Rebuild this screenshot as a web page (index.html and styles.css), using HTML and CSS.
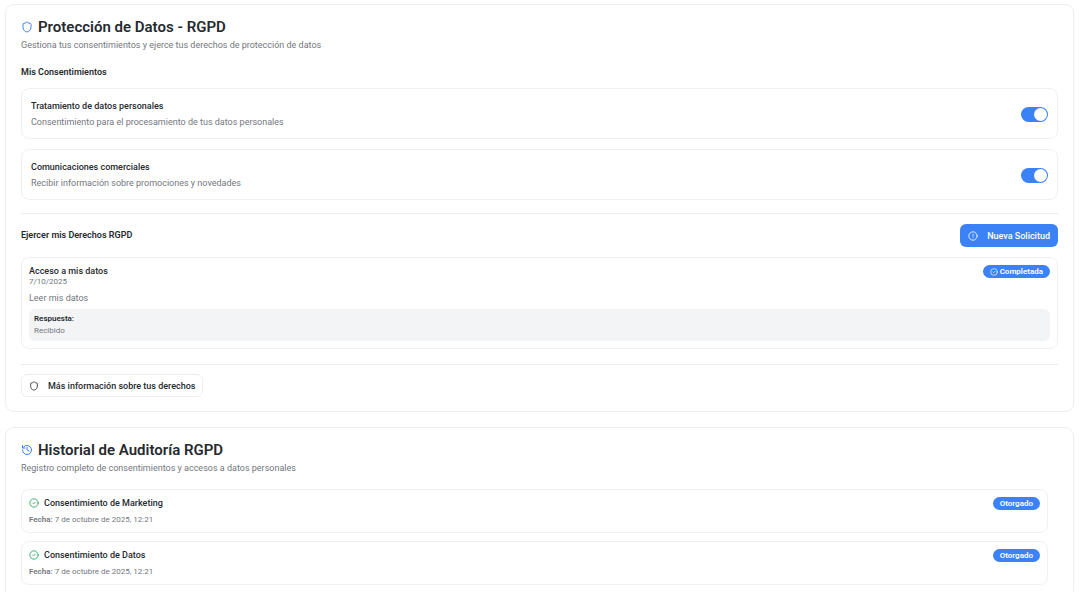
FILE: index.html
```html
<!DOCTYPE html>
<html lang="es">
<head>
<meta charset="utf-8">
<meta name="viewport" content="width=device-width, initial-scale=1">
<title>Protección de Datos - RGPD</title>
<link rel="stylesheet" href="styles.css">
</head>
<body>
<svg class="sprite" aria-hidden="true">
  <symbol id="shield" viewBox="0 0 24 24"><path d="M20 13c0 5-3.500 7.500-7.660 8.950a1 1 0 0 1-.67-.01C7.500 20.500 4 18 4 13V6a1 1 0 0 1 1-1c2 0 4.500-1.200 6.240-2.720a1.170 1.170 0 0 1 1.520 0C14.510 3.810 17 5 19 5a1 1 0 0 1 1 1z"/></symbol>
  <symbol id="history" viewBox="0 0 24 24"><path d="M3 12a9 9 0 1 0 9-9 9.750 9.750 0 0 0-6.740 2.740L3 8"/><path d="M3 3v5h5"/><path d="M12 7v5l4 2"/></symbol>
  <symbol id="alert" viewBox="0 0 24 24"><circle cx="12" cy="12" r="10"/><path d="M12 8v4M12 16h.01"/></symbol>
  <symbol id="check" viewBox="0 0 24 24"><circle cx="12" cy="12" r="10"/><path d="m9 12 2 2 4-4"/></symbol>
</svg>
<main class="page">
  <section class="card">
    <header class="card-header">
      <h1 class="card-title"><svg class="icon icon-title"><use href="#shield"/></svg>Protección de Datos - RGPD</h1>
      <p class="text">Gestiona tus consentimientos y ejerce tus derechos de protección de datos</p>
    </header>
    <h2 class="section-title">Mis Consentimientos</h2>
    <div class="consents">
      <div class="consent">
        <div class="consent-copy">
          <label class="label" for="personal">Tratamiento de datos personales</label>
          <p class="text">Consentimiento para el procesamiento de tus datos personales</p>
        </div>
        <input class="switch" type="checkbox" role="switch" id="personal" checked>
      </div>
      <div class="consent">
        <div class="consent-copy">
          <label class="label" for="commercial">Comunicaciones comerciales</label>
          <p class="text">Recibir información sobre promociones y novedades</p>
        </div>
        <input class="switch" type="checkbox" role="switch" id="commercial" checked>
      </div>
    </div>
    <div class="rights">
      <div class="row">
        <h2 class="section-title">Ejercer mis Derechos RGPD</h2>
        <button class="button button-primary" type="button"><svg class="icon icon-button"><use href="#alert"/></svg>Nueva Solicitud</button>
      </div>
      <article class="request">
        <div class="row row-top">
          <div>
            <h3 class="item-title">Acceso a mis datos</h3>
            <p class="date">7/10/2025</p>
          </div>
          <span class="badge"><svg class="icon icon-badge"><use href="#check"/></svg>Completada</span>
        </div>
        <p class="request-text">Leer mis datos</p>
        <div class="response">
          <p class="response-title">Respuesta:</p>
          <p>Recibido</p>
        </div>
      </article>
    </div>
    <footer class="card-footer">
      <button class="button button-outline" type="button"><svg class="icon icon-button"><use href="#shield"/></svg>Más información sobre tus derechos</button>
    </footer>
  </section>
  <section class="card">
    <header class="card-header">
      <h1 class="card-title"><svg class="icon icon-title"><use href="#history"/></svg>Historial de Auditoría RGPD</h1>
      <p class="text">Registro completo de consentimientos y accesos a datos personales</p>
    </header>
    <div class="history">
      <article class="entry">
        <div>
          <h3 class="item-title"><svg class="icon icon-entry"><use href="#check"/></svg>Consentimiento de Marketing</h3>
          <p class="entry-date"><strong>Fecha:</strong> 7 de octubre de 2025, 12:21</p>
        </div>
        <span class="badge">Otorgado</span>
      </article>
      <article class="entry">
        <div>
          <h3 class="item-title"><svg class="icon icon-entry"><use href="#check"/></svg>Consentimiento de Datos</h3>
          <p class="entry-date"><strong>Fecha:</strong> 7 de octubre de 2025, 12:21</p>
        </div>
        <span class="badge">Otorgado</span>
      </article>
    </div>
  </section>
</main>
</body>
</html>
```
FILE: styles.css
```css
* { box-sizing: border-box; }
html { height: 100vh; overflow: hidden; }
body {
  margin: 0;
  background: #fff;
  color: #262a2e;
  font-family: Roboto, "Liberation Sans", sans-serif;
  font-size: 9px;
  line-height: 14px;
}
h1, h2, h3, p { margin: 0; }
button { font: inherit; }
.sprite { position: absolute; width: 0; height: 0; }
.page { display: flex; flex-direction: column; gap: 15px; padding: 4px 6px 4px 5px; }
.card { padding: 14px 15px; border: 1px solid #ededef; border-radius: 9px; }
.card-header { display: grid; gap: 3px; margin-bottom: 14px; }
.card-title { display: flex; align-items: center; gap: 5px; font-size: 15px; line-height: 16px; font-weight: 600; }
.icon { flex: none; fill: none; stroke: currentColor; stroke-width: 2; stroke-linecap: round; stroke-linejoin: round; }
.icon-title { width: 12px; height: 12px; color: #3b82f6; }
.icon-button { width: 10px; height: 10px; }
.icon-badge { width: 8px; height: 8px; }
.icon-entry { width: 10px; height: 10px; color: #22a35a; }
.text { color: #73777d; }
.section-title { font-size: 9px; line-height: 13px; font-weight: 600; }
.consents { display: grid; gap: 10px; margin-top: 9px; }
.consent { display: flex; align-items: center; justify-content: space-between; padding: 10px 9px 9px; border: 1px solid #f0f0f2; border-radius: 8px; }
.consent-copy { display: grid; gap: 2px; }
.label { font-weight: 500; }
.switch { appearance: none; display: flex; align-items: center; justify-content: flex-end; width: 27px; height: 15px; margin: 0; padding: 1px; border-radius: 8px; background: #3b82f6; cursor: pointer; }
.switch::before { content: ""; width: 13px; height: 13px; border-radius: 50%; background: #fff; }
.switch:not(:checked) { justify-content: flex-start; background: #d8dade; }
.rights { margin-top: 13px; padding-top: 10px; border-top: 1px solid #ededef; }
.row { display: flex; align-items: center; justify-content: space-between; }
.row-top { align-items: flex-start; }
.button { display: inline-flex; align-items: center; gap: 9px; height: 23px; padding: 0 7px; border: 1px solid transparent; border-radius: 6px; font-weight: 500; cursor: pointer; }
.button-primary { background: #3b82f6; color: #fff; }
.button-outline { background: #fff; border-color: #ededef; color: #262a2e; }
.request { margin-top: 10px; padding: 7px; border: 1px solid #f0f0f2; border-radius: 8px; }
.item-title { display: flex; align-items: center; gap: 5px; font-size: 9px; line-height: 12px; font-weight: 500; }
.date { color: #73777d; font-size: 8px; line-height: 10px; }
.badge { display: inline-flex; align-items: center; gap: 2px; height: 13px; padding: 0 7px; border-radius: 7px; background: #3b82f6; color: #fff; font-size: 8px; line-height: 13px; font-weight: 600; }
.request-text { margin-top: 5px; color: #73777d; line-height: 12px; }
.response { display: grid; gap: 2px; margin-top: 5px; padding: 5px; border-radius: 6px; background: #f3f4f6; color: #73777d; font-size: 8px; line-height: 10px; }
.response-title { color: #262a2e; font-weight: 600; }
.card-footer { margin-top: 15px; padding-top: 9px; border-top: 1px solid #ededef; }
.card-footer .button { display: flex; }
.history { display: grid; gap: 8px; padding-right: 10px; }
.entry { display: flex; align-items: flex-start; justify-content: space-between; padding: 7px; border: 1px solid #f0f0f2; border-radius: 8px; }
.entry-date { margin-top: 5px; color: #73777d; font-size: 8px; line-height: 11px; }
.entry-date strong { font-weight: 600; }
```
